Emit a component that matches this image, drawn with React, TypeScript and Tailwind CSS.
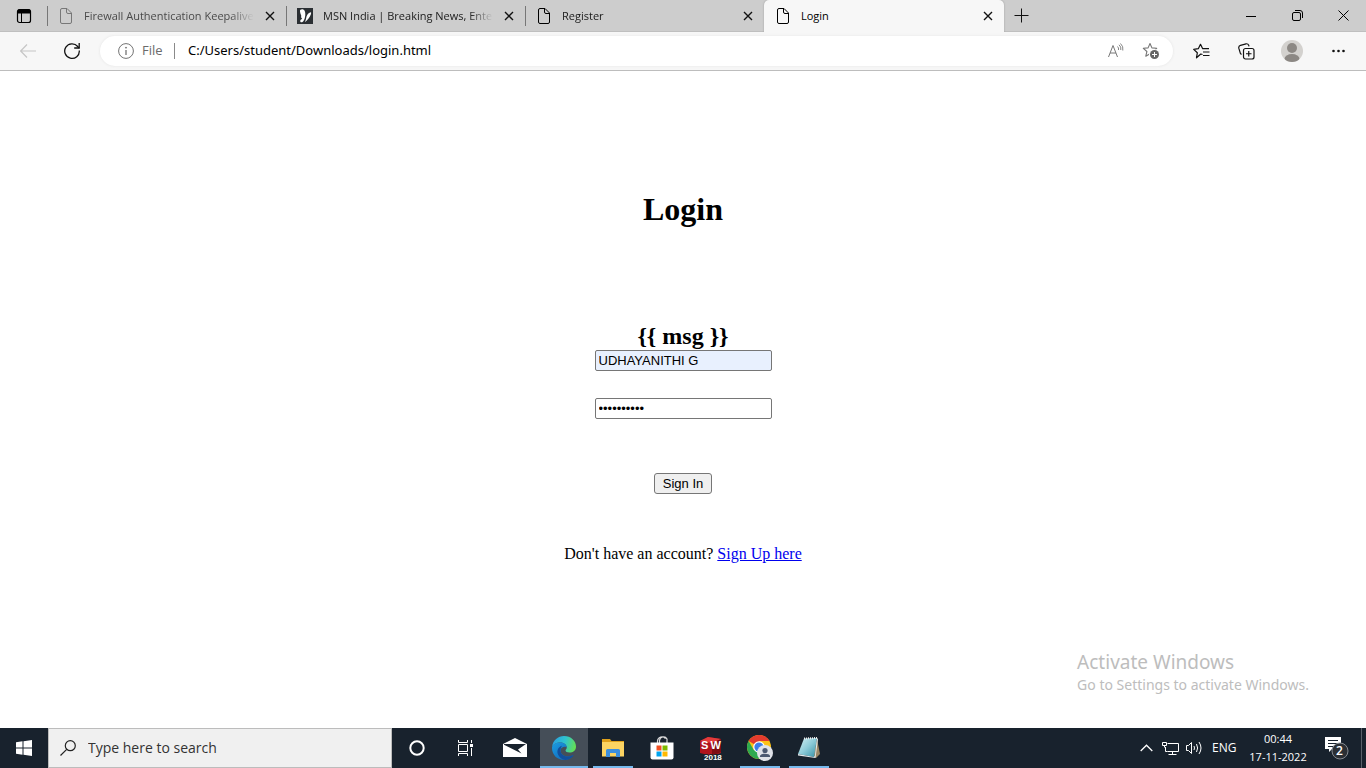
import React, { useState } from "react";

type IconProps = { className?: string };

const PageIcon = ({ className = "" }: IconProps) => (
  <svg className={`shrink-0 ${className}`} width="16" height="18" viewBox="0 0 16 18" fill="none" stroke="currentColor">
    <path d="M4 1.500h5l4.500 4.500v9a1.500 1.500 0 0 1-1.500 1.500H4A1.500 1.500 0 0 1 2.500 15V3A1.500 1.500 0 0 1 4 1.500Z" />
    <path d="M8.500 1.500V5A1.500 1.500 0 0 0 10 6.500h3.500" />
  </svg>
);

const MsnIcon = () => (
  <svg className="shrink-0" width="16" height="16" viewBox="0 0 16 16">
    <rect width="16" height="16" fill="#2b2f33" />
    <path d="M3 3.500C2.500 1 6 .5 7.500 2.500c1 2 1 4.500.5 6.500-.4 2.500-1.300 4-2.500 5-1.200.8-2.300 0-2.300-1 0-1.300 1.300-1.800 2-2.300C3.800 9.800 4.200 8.500 4.200 7.500 3.500 6 3.200 4.800 3 3.500Z" fill="#fff" />
    <path d="M9.500 8.500C10.500 6 12 4.500 13.800 4.200c.6.300.3 1.300 0 2.300-1.200 3-3.300 5.800-5.800 7.500.8-1.700 1.200-3.500 1.500-5.500Z" fill="#fff" />
  </svg>
);

const CloseIcon = () => (
  <svg width="10" height="10" viewBox="0 0 10 10" stroke="#111" strokeWidth="1.400">
    <path d="m1 1 8 8M9 1 1 9" />
  </svg>
);

type TabData = { title: string; icon: "page" | "msn"; dim?: boolean };

const tabs: TabData[] = [
  { title: "Firewall Authentication Keepalive", icon: "page", dim: true },
  { title: "MSN India | Breaking News, Entertainment", icon: "msn" },
  { title: "Register", icon: "page" },
];

const Tab = ({ tab }: { tab: TabData }) => (
  <div className="flex h-8 w-[239px] min-w-0 items-center self-start">
    <span className="h-5 w-px shrink-0 bg-[#777]" />
    <button type="button" className="flex min-w-0 flex-1 items-center gap-[10px] pl-[10px] text-left">
      {tab.icon === "msn" ? <MsnIcon /> : <PageIcon className={tab.dim ? "text-[#777]" : "text-black"} />}
      <span
        className={`flex-1 overflow-hidden whitespace-nowrap [mask-image:linear-gradient(to_right,#000_86%,transparent)] ${
          tab.dim ? "text-[#4a4a4a]" : "text-[#1b1b1b]"
        }`}
      >
        {tab.title}
      </span>
    </button>
    <button type="button" aria-label={`Close ${tab.title}`} className="flex w-8 shrink-0 justify-center">
      <CloseIcon />
    </button>
  </div>
);

const TabStrip = () => (
  <header className="flex h-8 items-center border-b border-[#bfbfbf] bg-[#cdcdcd] text-[11px]">
    <button type="button" aria-label="Tab actions" className="flex w-[47px] shrink-0 justify-center">
      <svg width="16" height="16" viewBox="0 0 16 16" fill="none" stroke="#000">
        <rect x="1.500" y="1.500" width="13" height="13" rx="2" strokeWidth="1.200" />
        <path d="M2 3.500h12" strokeWidth="4" />
        <path d="M5.500 5v9.500" />
      </svg>
    </button>
    {tabs.map((tab) => (
      <Tab key={tab.title} tab={tab} />
    ))}
    <div className="flex h-8 w-60 items-center self-start rounded-t-[5px] bg-[#f7f7f7] shadow-[0_0_2px_#999] [clip-path:inset(0_-3px_0_-3px)]">
      <button type="button" className="flex flex-1 items-center gap-[10px] pl-[11px] text-left text-black">
        <PageIcon />
        Login
      </button>
      <button type="button" aria-label="Close Login" className="flex w-8 justify-center">
        <CloseIcon />
      </button>
    </div>
    <button type="button" aria-label="New tab" className="flex w-[35px] justify-center">
      <svg width="15" height="15" viewBox="0 0 15 15" stroke="#111">
        <path d="M7.500.5v14M.5 7.500h14" />
      </svg>
    </button>
    <div className="ml-auto flex">
      <button type="button" aria-label="Minimize" className="flex h-8 w-[46px] items-center justify-center">
        <svg width="10" height="10" viewBox="0 0 10 10" stroke="#000">
          <path d="M0 5.500h10" />
        </svg>
      </button>
      <button type="button" aria-label="Restore" className="flex h-8 w-[46px] items-center justify-center">
        <svg width="11" height="11" viewBox="0 0 11 11" fill="none" stroke="#000">
          <rect x=".5" y="2.500" width="8" height="8" rx="1.500" />
          <path d="M3 .5h5A2.500 2.500 0 0 1 10.500 3v5" />
        </svg>
      </button>
      <button type="button" aria-label="Close window" className="flex h-8 w-[46px] items-center justify-center">
        <svg width="11" height="11" viewBox="0 0 11 11" stroke="#000">
          <path d="m.5.5 10 10M10.500.5l-10 10" />
        </svg>
      </button>
    </div>
  </header>
);

const STAR = "M8 1.500 9.900 5.900 14.700 6.300 11.100 9.500 12.200 14.200 8 11.700 3.800 14.200 4.900 9.500 1.300 6.300 6.100 5.900Z";

const Toolbar = () => (
  <div className="flex h-[39px] items-center border-b border-[#bdbdbd] bg-[#f7f7f7]">
    <div className="flex w-[100px] shrink-0 items-center gap-7 pl-5">
      <button type="button" aria-label="Back">
        <svg width="16" height="14" viewBox="0 0 16 14" fill="none" stroke="#c6c6c6" strokeWidth="1.200">
          <path d="M7 .5.700 7 7 13.500M1 7h15" />
        </svg>
      </button>
      <button type="button" aria-label="Refresh">
        <svg width="16" height="18" viewBox="0 0 16 18" fill="none" stroke="#111" strokeWidth="1.300">
          <path d="M15.300 8.500A7.300 7.300 0 1 1 13.700 4.500L15 6" />
          <path d="M15.200 1v5h-5" />
        </svg>
      </button>
    </div>
    <div className="flex h-[30px] flex-1 items-center rounded-full bg-white pl-[18px] pr-3 shadow-[0_0_3px_#e4e4e4]">
      <svg className="shrink-0" width="16" height="16" viewBox="0 0 16 16" fill="none" stroke="#737373">
        <circle cx="8" cy="8" r="7.400" />
        <path d="M8 7v5" strokeWidth="1.300" />
        <circle cx="8" cy="4.700" r=".5" fill="#737373" />
      </svg>
      <span className="ml-2 w-[32px] text-[13px] text-[#6b6b6b]">File</span>
      <span className="h-4 w-px bg-[#8a8a8a]" />
      <input
        aria-label="Address"
        defaultValue="C:/Users/student/Downloads/login.html"
        className="ml-[13px] min-w-0 flex-1 bg-transparent font-['Noto_Sans',sans-serif] text-[13px] text-black outline-none"
      />
      <button type="button" aria-label="Read aloud" className="mr-4">
        <svg width="18" height="16" viewBox="0 0 18 16" fill="none" stroke="#777">
          <path d="M1.500 14 6 2.500 10.500 14M3 10h6" />
          <path d="M10.500 3.500q1.500 1.300 1 3.500M12 1.800q2.500 2 1.800 5.200M13.500.5q3.200 3 2.300 7" strokeWidth=".9" />
        </svg>
      </button>
      <button type="button" aria-label="Add to favorites">
        <svg width="20" height="18" viewBox="0 0 20 18">
          <path d={STAR} transform="translate(1 0)" fill="none" stroke="#777" strokeWidth="1.100" strokeLinejoin="round" />
          <circle cx="13.500" cy="12.500" r="5.500" fill="#fff" />
          <circle cx="13.500" cy="12.500" r="4.500" fill="#666" />
          <path d="M13.500 10v5M11 12.500h5" stroke="#fff" />
        </svg>
      </button>
    </div>
    <div className="flex shrink-0 items-center pl-5 pr-5">
      <button type="button" aria-label="Favorites">
        <svg width="17" height="17" viewBox="0 0 17 17" fill="none" stroke="#111" strokeWidth="1.200" strokeLinejoin="round">
          <path d="M9.500 11.500 7.800 11 3.500 14.800 4.300 9.800.700 6.400 5.300 5.700 7.500 1.300 9.700 5.700H16" />
          <path d="M10 9h6.500M10 12.500h6.500" />
        </svg>
      </button>
      <button type="button" aria-label="Collections" className="ml-7">
        <svg width="17" height="17" viewBox="0 0 17 17" fill="none" stroke="#111" strokeWidth="1.200">
          <rect x="5.500" y="5.500" width="10.500" height="10.500" rx="2" fill="#f7f7f7" />
          <path d="M10.750 8v5.500M8 10.750h5.500M3.500 11.500 2.400 10.500.800 5.200Q.400 3 2.500 2.300L8 .800q2-.3 2.700 1.500l.3 1" />
        </svg>
      </button>
      <button type="button" aria-label="Profile" className="ml-[26px]">
        <svg width="22" height="22" viewBox="0 0 22 22">
          <defs>
            <clipPath id="profile-disc">
              <circle cx="11" cy="11" r="11" />
            </clipPath>
          </defs>
          <g clipPath="url(#profile-disc)">
            <rect width="22" height="22" fill="#d3d1ce" />
            <circle cx="11" cy="8" r="5" fill="#8c8884" />
            <ellipse cx="11" cy="19" rx="7.500" ry="5" fill="#8c8884" />
          </g>
        </svg>
      </button>
      <button type="button" aria-label="Settings and more" className="ml-7">
        <svg width="15" height="4" viewBox="0 0 15 4" fill="#111">
          <circle cx="2.500" cy="2" r="1.300" />
          <circle cx="7.500" cy="2" r="1.300" />
          <circle cx="12.500" cy="2" r="1.300" />
        </svg>
      </button>
    </div>
  </div>
);

const fieldClass =
  "h-[21px] w-[177px] rounded-[2px] border border-[#767676] px-[3px] font-['Liberation_Sans',Arial,sans-serif] text-[13px] leading-4 text-black outline-none";

const LoginPage = () => {
  const [name, setName] = useState("UDHAYANITHI G");
  const [password, setPassword] = useState("password12");
  return (
    <main className="relative flex-1 bg-white font-['Liberation_Serif','Times_New_Roman',serif] text-base text-black">
      <form className="flex flex-col items-center pt-[120px]" onSubmit={(e) => e.preventDefault()}>
        <h1 className="text-[32px] font-bold leading-9">Login</h1>
        <h2 className="mt-24 text-2xl font-bold leading-[27px]">{"{{ msg }}"}</h2>
        <input
          aria-label="Username"
          className={`${fieldClass} bg-[#e8f0fe]`}
          value={name}
          onChange={(e) => setName(e.target.value)}
        />
        <input
          aria-label="Password"
          type="password"
          className={`${fieldClass} mt-[27px] bg-white`}
          value={password}
          onChange={(e) => setPassword(e.target.value)}
        />
        <button
          type="submit"
          className="mt-[54px] h-[21px] rounded-[3px] border border-[#767676] bg-[#efefef] px-2 font-['Liberation_Sans',Arial,sans-serif] text-[13px] leading-4"
        >
          Sign In
        </button>
        <p className="mt-[51px] leading-[18px]">
          Don't have an account?{" "}
          <a href="#signup" className="text-[#0000ee] underline">
            Sign Up here
          </a>
        </p>
      </form>
      <aside className="absolute bottom-8 right-[57px] font-['Noto_Sans',sans-serif] text-[#bdbdbd]">
        <p className="text-[19px] leading-6">Activate Windows</p>
        <p className="text-sm leading-[22px]">Go to Settings to activate Windows.</p>
      </aside>
    </main>
  );
};

const EdgeLogo = () => (
  <svg width="24" height="24" viewBox="0 0 24 24">
    <defs>
      <linearGradient id="edge-top" x1="0" y1=".4" x2="1" y2=".6">
        <stop offset="0" stopColor="#2a9fe0" />
        <stop offset=".5" stopColor="#2fc3cf" />
        <stop offset="1" stopColor="#66e04f" />
      </linearGradient>
      <linearGradient id="edge-side" x1="0" y1="0" x2="1" y2="1">
        <stop offset="0" stopColor="#1b9de2" />
        <stop offset="1" stopColor="#0f5cb0" />
      </linearGradient>
    </defs>
    <path d="M0 11C1 4 6 0 12 0c7 0 12 5 12 10.500 0 4-3 6-6.500 6-2.500 0-4-1-4-2 0-.8 1.300-1.200 1.300-3C14.800 9 12 6.500 8.500 6.500 4.500 6.500 1 8.500 0 11Z" fill="url(#edge-top)" />
    <path d="M0 12c0-3.500 4-5.500 8.500-5.500 3.800 0 6.300 2.500 6.300 5-1-1.600-6.300-1-6.300 3 0 4 4.500 7 9.500 5.800 1.500-.3 3-1.200 3.800-1.600C19.500 22 16 24 12 24 5.500 24 0 19 0 12Z" fill="url(#edge-side)" />
    <path d="M10 9.800C6 11 4.500 15 6 18.500c1.300 3 4 5.200 7.500 5.400 3.500 0 6.500-2 8.300-5.200-.8.400-2.300 1.300-3.800 1.600-5 1.200-9.500-1.800-9.500-5.800 0-1.800.6-3.200 1.500-4.700Z" fill="#134f9c" />
  </svg>
);

const ExplorerLogo = () => (
  <svg width="22" height="19" viewBox="0 0 22 19">
    <path d="M0 0h8l1.500 2H22v3H0Z" fill="#e0a11b" />
    <path d="M0 3h22v14.500H0Z" fill="#fcd462" />
    <path d="M4 18v-6.500A1.500 1.500 0 0 1 5.500 10h11a1.500 1.500 0 0 1 1.500 1.500V18h-4v-4H8v4Z" fill="#3c8fdd" />
  </svg>
);

const StoreLogo = () => (
  <svg width="24" height="24" viewBox="0 0 24 24">
    <path d="M7.500 7V5a4.500 4.500 0 0 1 8-2.500M9.500 7V4.500A4 4 0 0 1 17 3v4" fill="none" stroke="#ddd" strokeWidth="1.200" />
    <path d="M.5 6.500h23v15a2 2 0 0 1-2 2h-19a2 2 0 0 1-2-2Z" fill="#fff" />
    <path d="M6.500 9.500H11.500v5h-5Z" fill="#f25022" />
    <path d="M12.500 9.500h5v5h-5Z" fill="#7fba00" />
    <path d="M6.500 15.500h5v5h-5Z" fill="#00a4ef" />
    <path d="M12.500 15.500h5v5h-5Z" fill="#ffb900" />
  </svg>
);

const SolidWorksLogo = () => (
  <svg width="24" height="24" viewBox="0 0 24 24">
    <path d="M1 5 9 1l13 2v14l-9 3L1 17Z" fill="#b0141d" />
    <path d="m1 5 8-4 13 2-9 4Z" fill="#e33b3b" />
    <path d="m13 7 9-4v13l-9 4Z" fill="#7e0c14" />
    <text x="2" y="13" fontSize="11" fontWeight="700" fontFamily="Liberation Sans, sans-serif" fill="#fff">S</text>
    <text x="11.500" y="13" fontSize="11" fontWeight="700" fontFamily="Liberation Sans, sans-serif" fill="#fff">W</text>
    <text x="5" y="23.500" fontSize="8" fontWeight="700" fontFamily="Liberation Sans, sans-serif" fill="#fff" stroke="#18222d" strokeWidth="2" paintOrder="stroke">2018</text>
  </svg>
);

const ChromeLogo = () => (
  <svg width="26" height="26" viewBox="0 0 26 26">
    <circle cx="12" cy="12" r="12" fill="#fbc116" />
    <path d="M12 12 1.600 6A12 12 0 0 1 22.400 6H12Z" fill="#e33b2e" />
    <path d="M1.600 6A12 12 0 0 0 11.500 24L16.500 15 6.800 15Z" fill="#2da94f" />
    <circle cx="12" cy="12" r="5.800" fill="#fff" />
    <circle cx="12" cy="12" r="4.600" fill="#3c7de8" />
    <circle cx="18" cy="18" r="8" fill="#dfe2e8" />
    <circle cx="18" cy="15.500" r="2.600" fill="#4b5870" />
    <path d="M13 22v-1c0-1.500 2.500-2.300 5-2.300s5 .8 5 2.300v1Z" fill="#4b5870" />
  </svg>
);

const NotepadLogo = () => (
  <svg width="24" height="24" viewBox="0 0 24 24">
    <defs>
      <linearGradient id="note" x1="0" y1="0" x2="1" y2="1">
        <stop offset="0" stopColor="#d6f1f5" />
        <stop offset=".5" stopColor="#8ccbd8" />
        <stop offset="1" stopColor="#348fa4" />
      </linearGradient>
    </defs>
    <path d="m20 3 3 15-4 4-3-2Z" fill="#9b8765" />
    <path d="M7 2.500 20 2l-3 19-16-3Z" fill="url(#note)" />
    <path d="m1 18 16 3 1-1.500L20 2l1 1-2.500 19L1 19.500Z" fill="#e5ecee" />
    <path d="M7 2.500 20 2" stroke="#eee" strokeDasharray="1 1" strokeWidth="2" />
  </svg>
);

const CortanaIcon = () => (
  <svg width="16" height="16" viewBox="0 0 16 16" fill="none" stroke="#fff" strokeWidth="2">
    <circle cx="8" cy="8" r="6.700" />
  </svg>
);

const TaskViewIcon = () => (
  <svg width="18" height="16" viewBox="0 0 18 16" fill="none" stroke="#fff">
    <path d="M1.500 0v2.500h9V0M1.500 16v-2.500h9V16M14.500 0v3M14.500 8v8" />
    <path d="M1.500 4.500h9v7h-9Z" />
    <path d="M13 4h3v3h-3Z" fill="#fff" stroke="none" />
  </svg>
);

const MailIcon = () => (
  <svg width="24" height="20" viewBox="0 0 24 20">
    <path d="M0 6 12 0l12 6v13H0Z" fill="#fff" />
    <path d="M1 6h22l-8 5.500 3.500 4L1 6.800Z" fill="#18222d" />
  </svg>
);

type App = { name: string; icon: React.ReactNode; open?: boolean; active?: boolean };

const apps: App[] = [
  { name: "Cortana", icon: <CortanaIcon /> },
  { name: "Task View", icon: <TaskViewIcon /> },
  { name: "Mail", icon: <MailIcon /> },
  { name: "Microsoft Edge", icon: <EdgeLogo />, active: true },
  { name: "File Explorer", icon: <ExplorerLogo />, open: true },
  { name: "Microsoft Store", icon: <StoreLogo /> },
  { name: "SolidWorks 2018", icon: <SolidWorksLogo /> },
  { name: "Google Chrome", icon: <ChromeLogo />, open: true },
  { name: "Notepad", icon: <NotepadLogo />, open: true },
];

const Taskbar = () => (
  <footer className="flex h-10 items-stretch bg-[#18222d] text-white">
    <button type="button" aria-label="Start" className="flex w-12 items-center justify-center">
      <svg width="16" height="16" viewBox="0 0 16 16" fill="#fff">
        <path d="M0 2.200 6.500 1.300V7.500H0ZM7.500 1.200 16 0v7.500H7.500ZM0 8.500h6.500v6.200L0 13.800ZM7.500 8.500H16V16l-8.500-1.200Z" />
      </svg>
    </button>
    <label className="flex w-[344px] items-center gap-3 border border-[#bcbcbc] bg-[#f0f0f0] pl-[11px]">
      <svg className="shrink-0" width="16" height="16" viewBox="0 0 16 16" fill="none" stroke="#222" strokeWidth="1.200">
        <circle cx="10.300" cy="5.700" r="5" />
        <path d="M6.700 9.300.5 15.500" />
      </svg>
      <input
        aria-label="Search"
        placeholder="Type here to search"
        className="min-w-0 flex-1 bg-transparent text-sm text-black outline-none placeholder:text-[#333]"
      />
    </label>
    <nav className="flex gap-px pl-px">
      {apps.map((app) => (
        <button
          type="button"
          key={app.name}
          aria-label={app.name}
          className={`flex w-12 flex-col items-center ${app.active ? "bg-[#454e58]" : ""}`}
        >
          <span className="flex flex-1 items-center pt-[2px]">{app.icon}</span>
          <span className={`h-[2px] ${app.active ? "w-12 bg-[#76b9ed]" : app.open ? "w-10 bg-[#76b9ed]" : "w-10"}`} />
        </button>
      ))}
    </nav>
    <div className="ml-auto flex items-center text-xs">
      <button type="button" aria-label="Show hidden icons" className="mr-[9px]">
        <svg width="13" height="8" viewBox="0 0 13 8" fill="none" stroke="#fff" strokeWidth="1.300">
          <path d="m.7 7 5.800-5.800L12.300 7" />
        </svg>
      </button>
      <svg width="17" height="15" viewBox="0 0 17 15" fill="none" stroke="#fff">
        <path d="M5.500 2.500h11v8h-11M3.500 6v4.500h2M10.500 10.500v3M6.500 13.500h8" />
        <path d="M.5 1.500h4v3h-4ZM2.500 4.500v2" />
      </svg>
      <svg className="ml-[7px]" width="17" height="14" viewBox="0 0 17 14" fill="none" stroke="#fff">
        <path d="M.5 4.500h2l3-3v11l-3-3h-2Z" />
        <path d="M8 5q1 2 0 4M10.500 3q2.200 4 0 8M13 1q4 6 0 12" />
      </svg>
      <span className="ml-[9px] w-6">ENG</span>
      <time className="ml-3 w-[60px] whitespace-nowrap text-center text-[11px] leading-[18px]">
        00:44
        <br />
        17-11-2022
      </time>
      <button type="button" aria-label="Notifications, 2 new" className="relative ml-[17px] mr-3 h-6 w-6">
        <svg width="24" height="24" viewBox="0 0 24 24">
          <path d="M0 1h16v12H7l-3 3v-3H0Z" fill="#fff" />
          <path d="M3 4.500h10M3 7.500h10M3 10.500h6" stroke="#18222d" />
          <circle cx="15" cy="15" r="8" fill="#2b2f34" stroke="#858a90" />
        </svg>
        <span className="absolute left-[11px] top-[6px] text-[12px] font-semibold leading-[18px]">2</span>
      </button>
      <span className="h-10 w-px bg-[#59616a]" />
      <span className="w-1" />
    </div>
  </footer>
);

export default function App() {
  return (
    <div className="flex min-h-screen flex-col bg-white font-['Open_Sans','Noto_Sans',sans-serif]">
      <TabStrip />
      <Toolbar />
      <LoginPage />
      <Taskbar />
    </div>
  );
}
